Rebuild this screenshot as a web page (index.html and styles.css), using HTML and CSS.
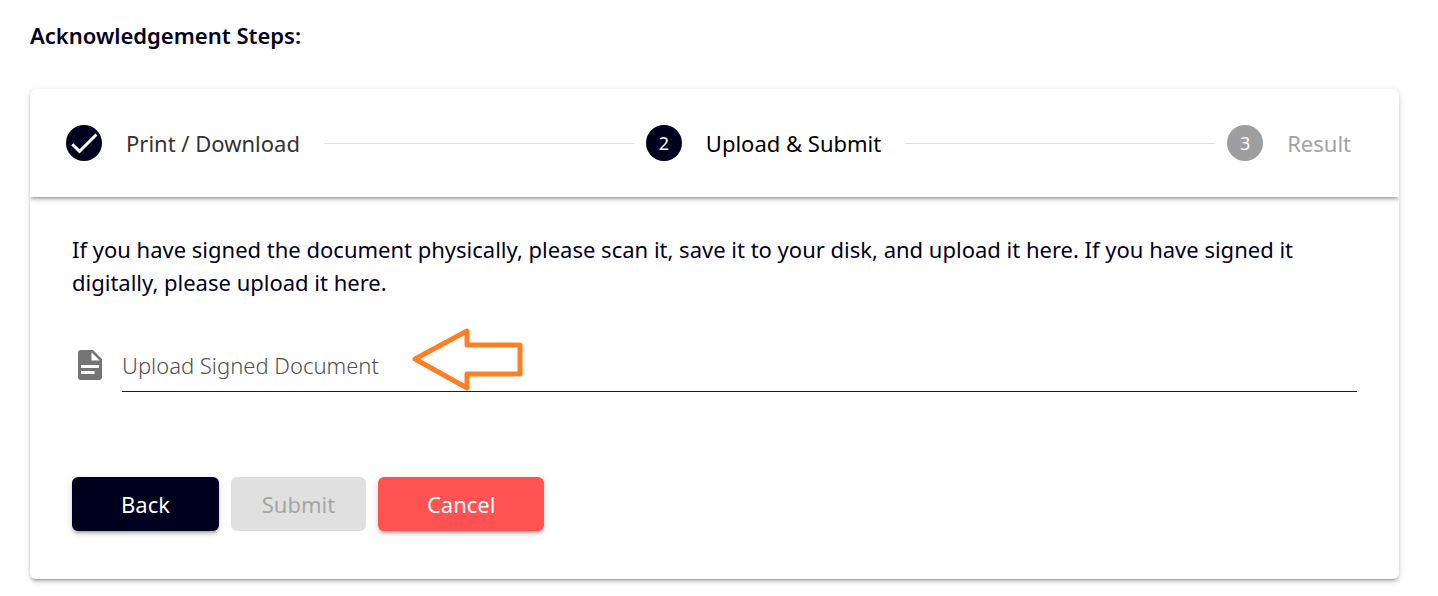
FILE: index.html
```html
<!DOCTYPE html>
<html lang="en">
<head>
<meta charset="utf-8">
<meta name="viewport" content="width=device-width, initial-scale=1">
<title>Acknowledgement Steps</title>
<link rel="stylesheet" href="styles.css">
</head>
<body>
<main class="page">
  <h1 class="title">Acknowledgement Steps:</h1>
  <section class="stepper">
    <ol class="steps">
      <li class="step step-done">
        <span class="badge">
          <svg class="check" viewBox="0 0 24 24" aria-hidden="true"><path fill="currentColor" d="M21 7 9 19l-5.500-5.500 1.410-1.410L9 16.170 19.590 5.590z"/></svg>
        </span>
        <span class="step-name">Print / Download</span>
      </li>
      <li class="line" role="presentation"></li>
      <li class="step step-active" aria-current="step">
        <span class="badge">2</span>
        <span class="step-name">Upload &amp; Submit</span>
      </li>
      <li class="line" role="presentation"></li>
      <li class="step">
        <span class="badge">3</span>
        <span class="step-name">Result</span>
      </li>
    </ol>
    <form class="content">
      <p class="note">If you have signed the document physically, please scan it, save it to your disk, and upload it here. If you have signed it digitally, please upload it here.</p>
      <div class="upload">
        <svg class="file-icon" viewBox="0 0 24 24" aria-hidden="true"><path fill="currentColor" d="M13 9h5.500L13 3.500V9M6 2h8l6 6v12a2 2 0 0 1-2 2H6a2 2 0 0 1-2-2V4c0-1.110.890-2 2-2m9 16v-2H6v2h9m3-4v-2H6v2h12z"/></svg>
        <div class="field">
          <label class="field-label" for="signed-document">Upload Signed Document</label>
          <input class="file-input" id="signed-document" type="file">
          <svg class="arrow" viewBox="0 0 112 64" aria-hidden="true"><path fill="none" stroke="#ff7f27" stroke-width="5" stroke-linejoin="round" d="M3 32 55 4v14h53v29H55v14z"/></svg>
        </div>
      </div>
      <div class="actions">
        <button class="button button-back" type="button">Back</button>
        <button class="button button-submit" type="submit" disabled>Submit</button>
        <button class="button button-cancel" type="button">Cancel</button>
      </div>
    </form>
  </section>
</main>
</body>
</html>
```

FILE: styles.css
```css
* {
  box-sizing: border-box;
}

body {
  margin: 0;
  background: #fff;
  color: #00001e;
  font-family: "Noto Sans", "Open Sans", sans-serif;
  font-size: 22px;
  font-weight: 400;
  line-height: 33px;
}

.page {
  padding: 19px 39px 16px 30px;
}

.title {
  margin: 0 0 37px;
  font-size: 22px;
  font-weight: 600;
  line-height: 33px;
}

.stepper,
.steps {
  box-shadow: 0 4px 2px -3px rgba(0, 0, 0, .2), 0 3px 3px rgba(0, 0, 0, .14), 0 2px 8px rgba(0, 0, 0, .12);
}

.stepper {
  border-radius: 6px;
  background: #fff;
}

.steps {
  display: flex;
  align-items: center;
  margin: 0;
  padding: 36px 48px 36px 36px;
  border-radius: 6px 6px 0 0;
  list-style: none;
  clip-path: inset(0 0 -12px 0);
}

.step {
  display: flex;
  align-items: center;
  gap: 24px;
  color: #a3a3a3;
}

.step-done {
  color: #333;
}

.step-active {
  color: #000;
}

.badge {
  display: flex;
  align-items: center;
  justify-content: center;
  width: 36px;
  height: 36px;
  border-radius: 50%;
  background: #9e9e9e;
  color: #fff;
  font-size: 18px;
}

.step-done .badge,
.step-active .badge {
  background: #00001e;
}

.check {
  width: 36px;
  height: 36px;
}

.line {
  flex: 1;
  height: 1px;
  margin: 0 12px 0 24px;
  background: #e0e0e0;
}

.content {
  padding: 36px 42px 48px;
}

.note {
  margin: 0 0 42px;
}

.upload {
  display: flex;
  align-items: flex-start;
  gap: 14px;
}

.file-icon {
  width: 36px;
  height: 36px;
  margin-top: 6px;
  color: #757575;
}

.field {
  position: relative;
  flex: 1;
  padding: 8px 0 9px;
  border-bottom: 1px solid #1e1e1e;
}

.field-label {
  color: #505050;
  font-weight: 300;
}

.file-input {
  position: absolute;
  inset: 0;
  width: 100%;
  opacity: 0;
  cursor: pointer;
}

.arrow {
  position: absolute;
  left: 290px;
  bottom: 0;
  width: 112px;
  height: 64px;
  pointer-events: none;
}

.actions {
  display: flex;
  gap: 12px;
  margin-top: 85px;
}

.button {
  min-width: 135px;
  height: 54px;
  padding: 0 49px;
  border: 0;
  border-radius: 6px;
  color: #fff;
  font: inherit;
  box-shadow: 0 4px 2px -3px rgba(0, 0, 0, .2), 0 3px 3px rgba(0, 0, 0, .14), 0 2px 8px rgba(0, 0, 0, .12);
}

.button-back {
  background: #00001e;
}

.button-submit {
  padding: 0 28px;
  background: #e0e0e0;
  color: #a6a6a6;
  box-shadow: none;
}

.button-cancel {
  background: #ff5252;
}
```
